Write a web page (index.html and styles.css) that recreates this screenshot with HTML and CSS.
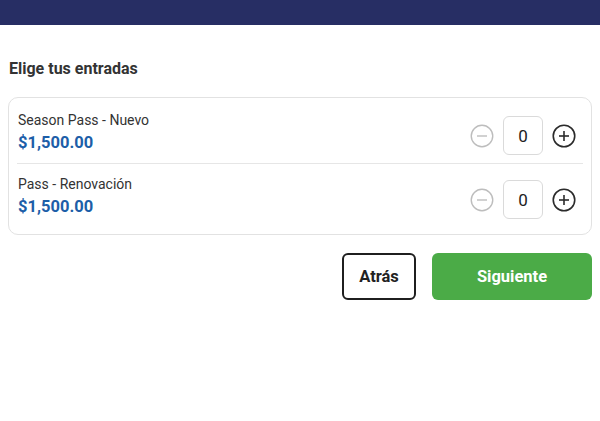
FILE: index.html
```html
<!DOCTYPE html>
<html lang="es">
<head>
<meta charset="utf-8">
<title>Elige tus entradas</title>
<link rel="stylesheet" href="styles.css">
</head>
<body>
<header class="topbar"></header>
<main class="page">
  <h2 class="title">Elige tus entradas</h2>
  <section class="card">
    <div class="row">
      <div class="info">
        <div class="name">Season Pass - Nuevo</div>
        <div class="price">$1,500.00</div>
      </div>
      <div class="stepper">
        <button class="icon-btn minus" aria-label="Quitar">
          <svg viewBox="0 0 24 24" width="24" height="24"><circle cx="12" cy="12" r="10.75" fill="none" stroke="currentColor" stroke-width="1.4"/><line x1="7" y1="12" x2="17" y2="12" stroke="currentColor" stroke-width="1.4"/></svg>
        </button>
        <div class="qty">0</div>
        <button class="icon-btn plus" aria-label="Agregar">
          <svg viewBox="0 0 24 24" width="24" height="24"><circle cx="12" cy="12" r="10.75" fill="none" stroke="currentColor" stroke-width="1.6"/><line x1="7" y1="12" x2="17" y2="12" stroke="currentColor" stroke-width="1.6"/><line x1="12" y1="7" x2="12" y2="17" stroke="currentColor" stroke-width="1.6"/></svg>
        </button>
      </div>
    </div>
    <div class="row">
      <div class="info">
        <div class="name">Pass - Renovación</div>
        <div class="price">$1,500.00</div>
      </div>
      <div class="stepper">
        <button class="icon-btn minus" aria-label="Quitar">
          <svg viewBox="0 0 24 24" width="24" height="24"><circle cx="12" cy="12" r="10.75" fill="none" stroke="currentColor" stroke-width="1.4"/><line x1="7" y1="12" x2="17" y2="12" stroke="currentColor" stroke-width="1.4"/></svg>
        </button>
        <div class="qty">0</div>
        <button class="icon-btn plus" aria-label="Agregar">
          <svg viewBox="0 0 24 24" width="24" height="24"><circle cx="12" cy="12" r="10.75" fill="none" stroke="currentColor" stroke-width="1.6"/><line x1="7" y1="12" x2="17" y2="12" stroke="currentColor" stroke-width="1.6"/><line x1="12" y1="7" x2="12" y2="17" stroke="currentColor" stroke-width="1.6"/></svg>
        </button>
      </div>
    </div>
  </section>
  <div class="actions">
    <button class="btn btn-back">Atrás</button>
    <button class="btn btn-next">Siguiente</button>
  </div>
</main>
</body>
</html>
```

FILE: styles.css
```css
* { box-sizing: border-box; }

html, body {
  margin: 0;
  padding: 0;
  background: #ffffff;
  font-family: Roboto, "Liberation Sans", Arial, sans-serif;
  color: #333333;
}

.topbar {
  height: 25px;
  background: #272e64;
}

.page {
  padding: 0 8px;
}

.title {
  margin: 34px 0 0 1px;
  font-size: 16px;
  line-height: 20px;
  font-weight: 700;
  color: #333333;
}

.card {
  margin-top: 18px;
  border: 1px solid #e2e2e2;
  border-radius: 10px;
  padding: 2px 8px 7px;
}

.row {
  display: flex;
  align-items: flex-end;
  justify-content: space-between;
  padding: 10px 0 8px;
}

.row + .row {
  border-top: 1px solid #e6e6e6;
}

.info {
  padding-left: 1px;
}

.name {
  font-size: 14px;
  line-height: 21px;
  color: #333333;
}

.price {
  font-size: 16.5px;
  line-height: 24px;
  font-weight: 700;
  color: #1c5ea8;
}

.stepper {
  display: flex;
  align-items: center;
  gap: 9px;
  margin-right: 7px;
}

.icon-btn {
  width: 24px;
  height: 24px;
  padding: 0;
  border: 0;
  background: none;
  display: flex;
  align-items: center;
  justify-content: center;
}

.icon-btn.minus { color: #bdbdbd; }
.icon-btn.plus { color: #2b2b2b; }

.qty {
  width: 40px;
  height: 39px;
  border: 1px solid #dadada;
  border-radius: 6px;
  display: flex;
  align-items: center;
  justify-content: center;
  font-size: 17px;
  color: #222222;
}

.actions {
  display: flex;
  justify-content: flex-end;
  gap: 16px;
  margin-top: 18px;
}

.btn {
  height: 47px;
  border-radius: 6px;
  font-family: Roboto, "Liberation Sans", Arial, sans-serif;
  font-size: 16.5px;
  font-weight: 700;
  cursor: pointer;
}

.btn-back {
  width: 74px;
  padding: 0;
  background: #ffffff;
  border: 2px solid #1f1f1f;
  color: #222222;
}

.btn-next {
  width: 160px;
  background: #4bab47;
  border: 0;
  color: #ffffff;
}
```
